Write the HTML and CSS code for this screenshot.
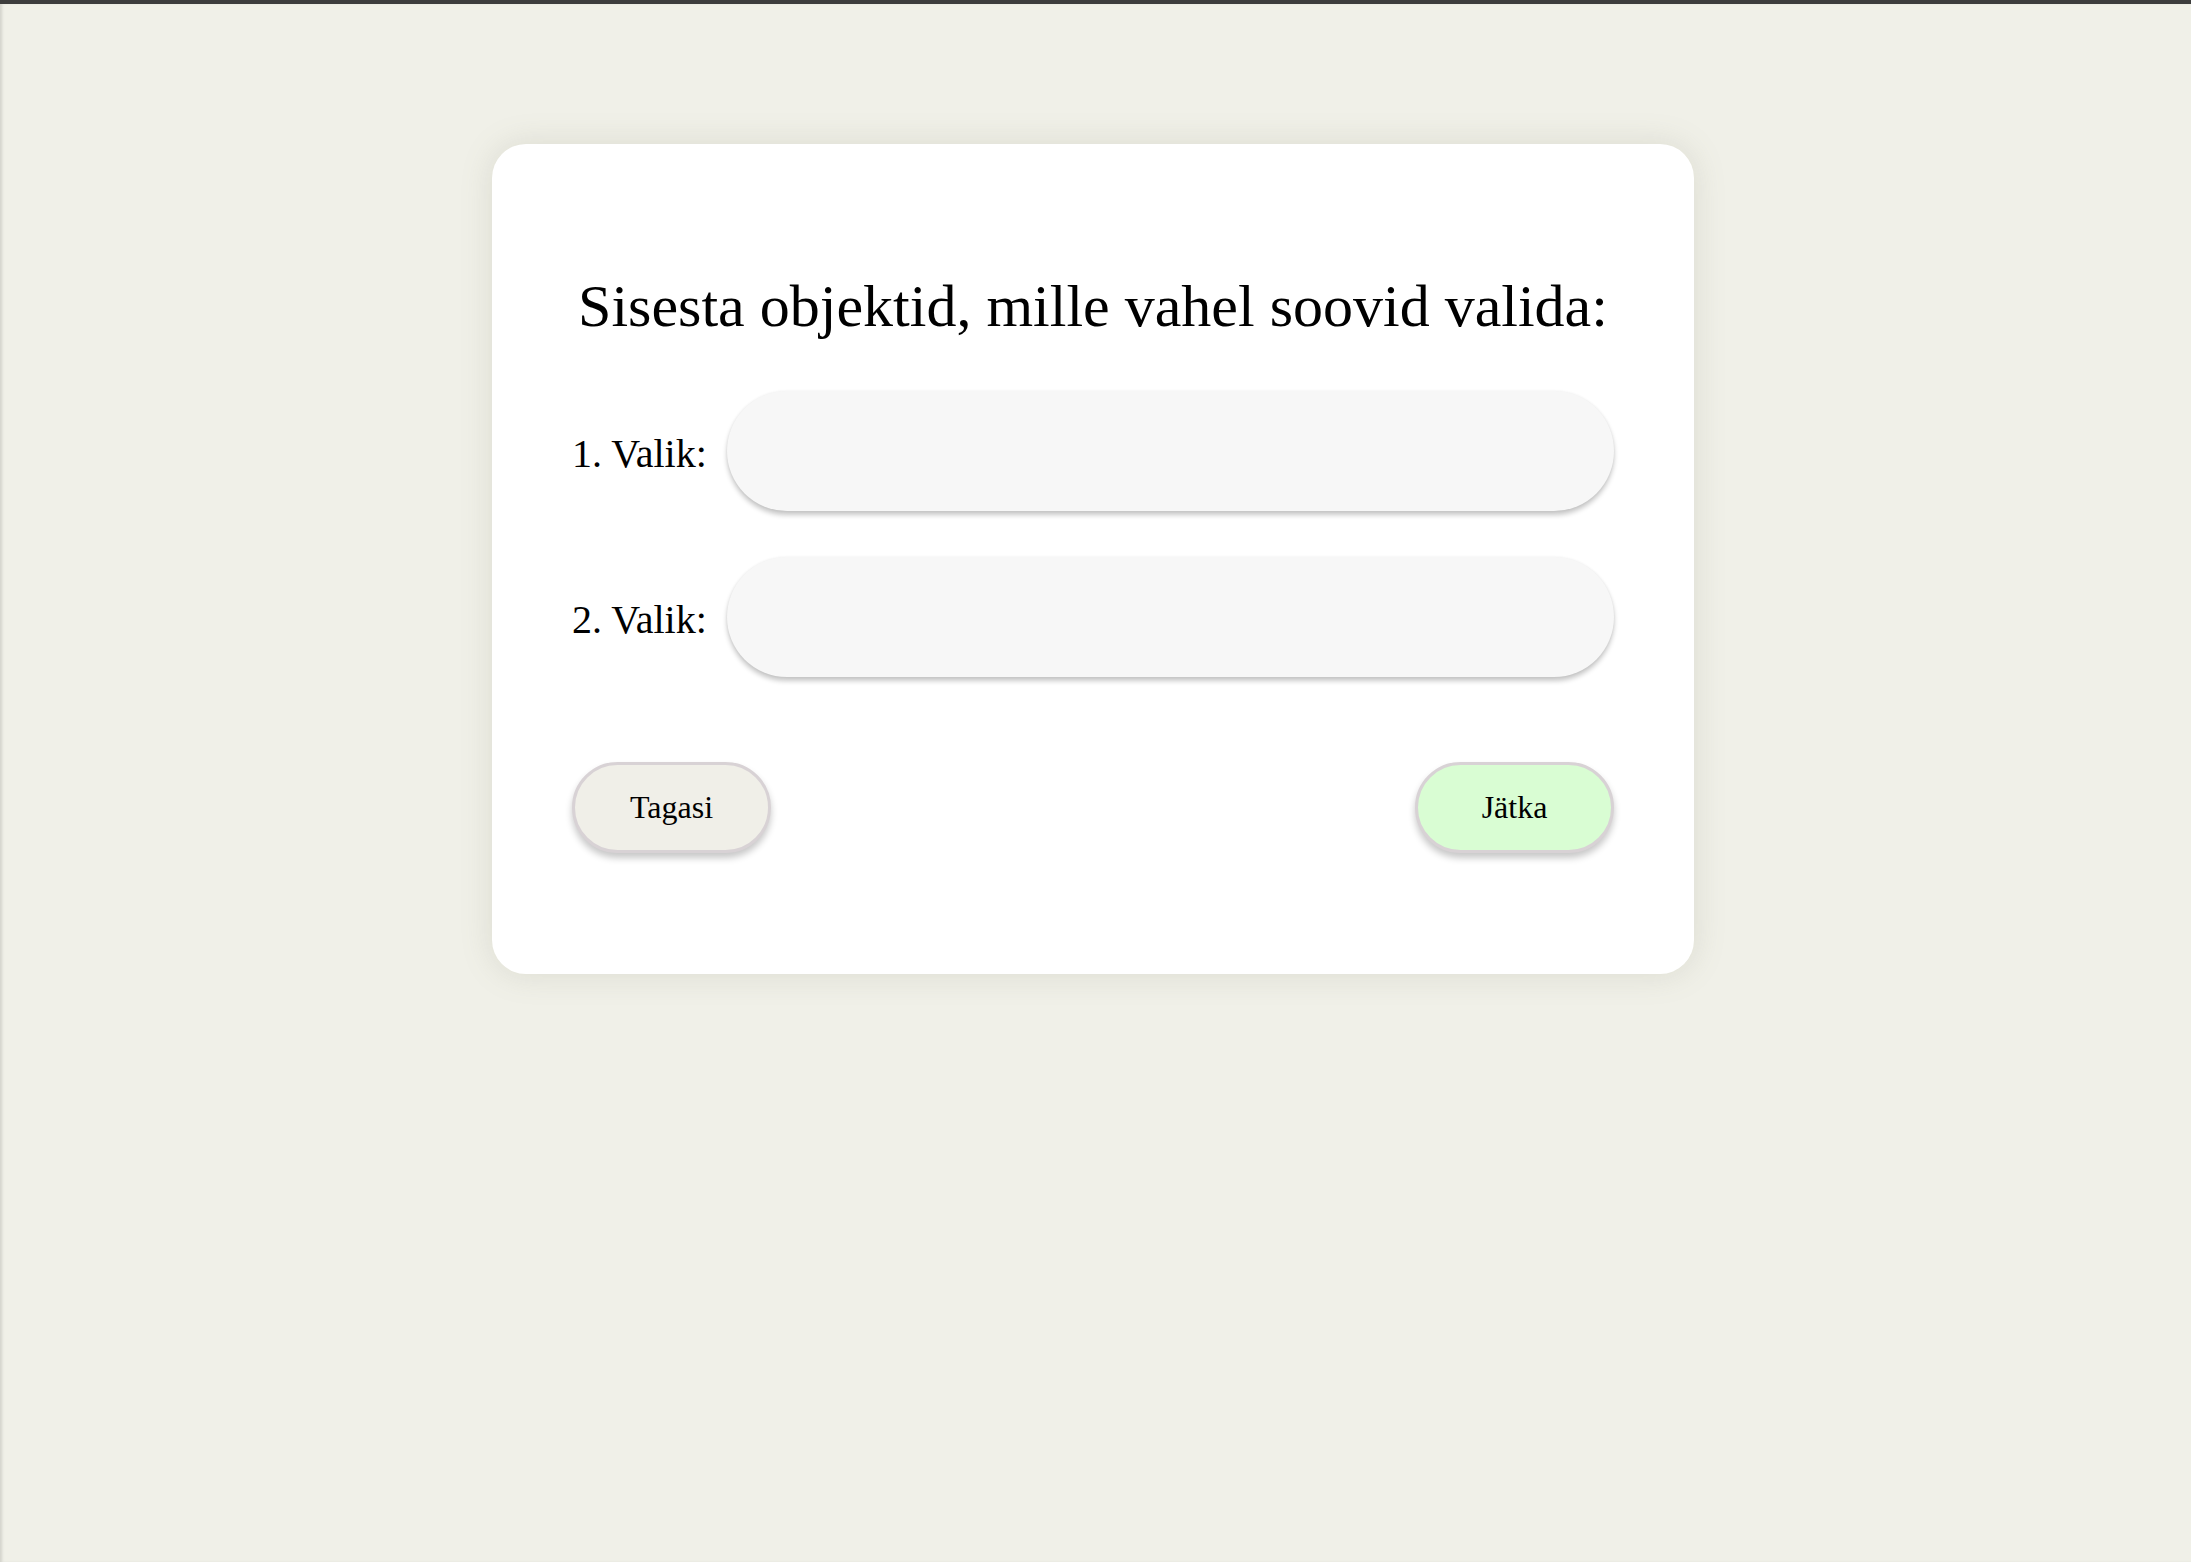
FILE: index.html
```html
<!DOCTYPE html>
<html lang="et">
<head>
<meta charset="utf-8">
<title>Valikud</title>
<link rel="stylesheet" href="styles.css">
</head>
<body>
<div class="page">
  <main class="card">
    <h1 class="title">Sisesta objektid, mille vahel soovid valida:</h1>
    <div class="fields">
      <div class="row">
        <label class="label" for="v1">1. Valik:</label>
        <input class="field" id="v1" type="text">
      </div>
      <div class="row">
        <label class="label" for="v2">2. Valik:</label>
        <input class="field" id="v2" type="text">
      </div>
    </div>
    <div class="actions">
      <button class="btn btn-back" type="button">Tagasi</button>
      <button class="btn btn-next" type="button">Jätka</button>
    </div>
  </main>
</div>
</body>
</html>
```
FILE: styles.css
```css
html, body {
  margin: 0;
  padding: 0;
  height: 100%;
}

body {
  background: #f0f0e8;
  font-family: "Liberation Serif", "Times New Roman", serif;
  color: #000;
  border-top: 4px solid #3d3d3d;
  box-sizing: border-box;
  box-shadow: inset 3px 0 3px -1px rgba(0, 0, 0, 0.12);
}

.page {
  padding-top: 140px;
  padding-right: 5px;
}

.card {
  width: 1202px;
  box-sizing: border-box;
  margin: 0 auto;
  background: #fff;
  border-radius: 34px;
  padding: 80px 80px 121px 80px;
  box-shadow: 0 0 32px rgba(120, 120, 100, 0.18);
}

.title {
  margin: 48px 0 50px 0;
  font-size: 60px;
  font-weight: normal;
  text-align: center;
  line-height: 1.15;
}

.fields {
  display: flex;
  flex-direction: column;
  gap: 46px;
}

.row {
  display: flex;
  align-items: center;
  gap: 20px;
}

.label {
  font-size: 40px;
  white-space: nowrap;
  padding-top: 4px;
}

.field {
  flex: 1;
  height: 120px;
  box-sizing: border-box;
  border: none;
  border-radius: 60px;
  background: #f7f7f7;
  box-shadow: 0 4px 5px rgba(0, 0, 0, 0.22), 0 0 3px rgba(0, 0, 0, 0.06);
  font-size: 32px;
  font-family: inherit;
  padding: 0 40px;
  outline: none;
}

.actions {
  display: flex;
  justify-content: space-between;
  margin-top: 85px;
}

.btn {
  width: 199px;
  height: 91px;
  box-sizing: border-box;
  border: 3px solid #d8d2d5;
  border-radius: 46px;
  font-family: inherit;
  font-size: 32px;
  color: #000;
  box-shadow: 0 5px 7px rgba(0, 0, 0, 0.22);
  cursor: pointer;
}

.btn-back {
  background: #f0efe8;
}

.btn-next {
  background: #d9fdd3;
}
```
